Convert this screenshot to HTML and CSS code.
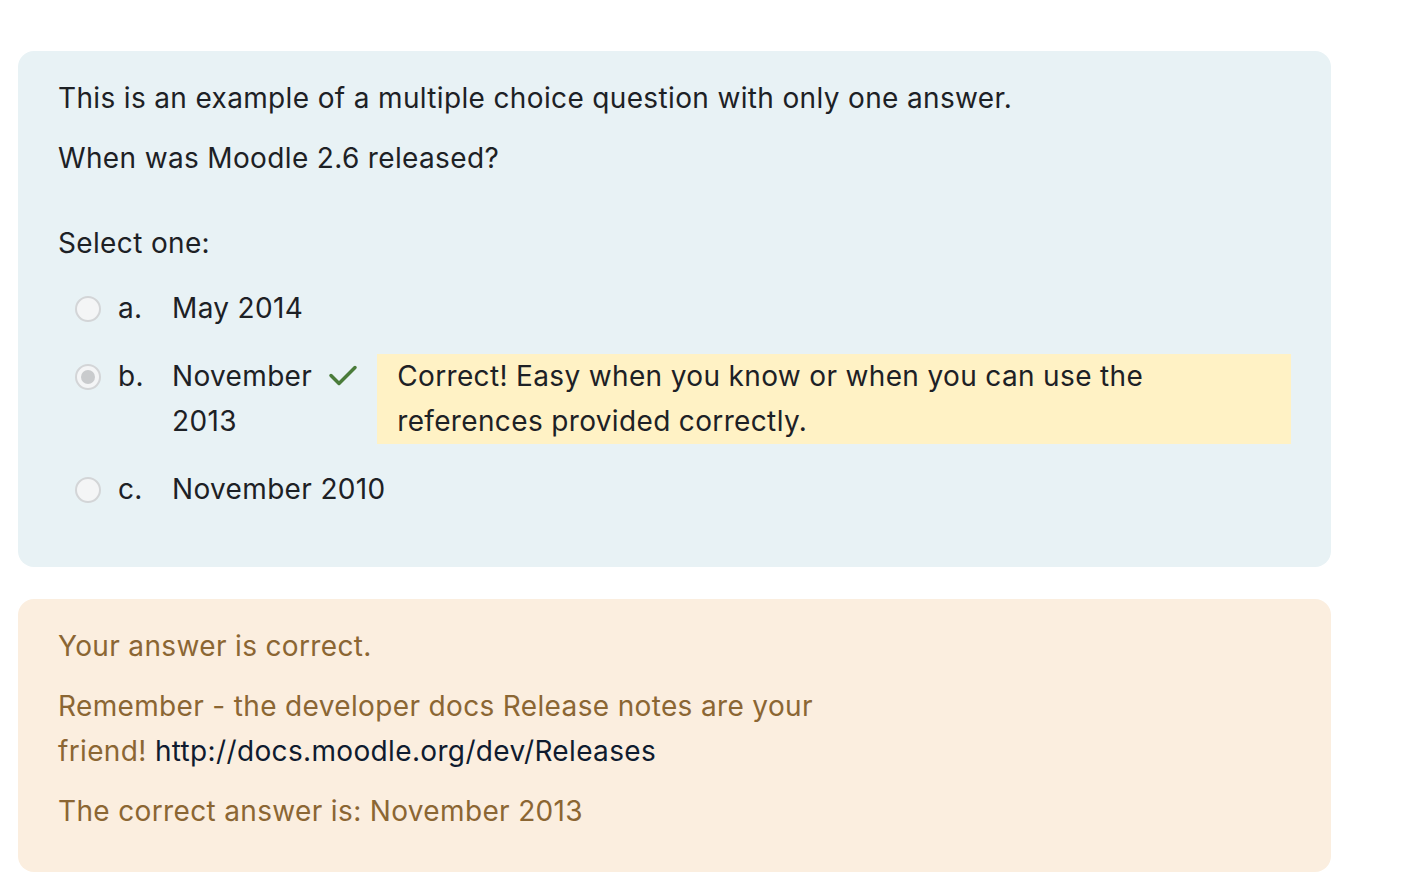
FILE: index.html
```html
<!DOCTYPE html>
<html lang="en">
<head>
<meta charset="utf-8">
<title>Question</title>
<link rel="stylesheet" href="styles.css">
</head>
<body>
<main class="que">
  <section class="formulation">
    <p class="qtext">This is an example of a multiple choice question with only one answer.</p>
    <p class="qtext">When was Moodle 2.6 released?</p>
    <p class="prompt">Select one:</p>
    <div class="answers">
      <div class="option">
        <span class="radio"></span>
        <span class="letter">a.</span>
        <span class="atext">May 2014</span>
      </div>
      <div class="option">
        <span class="radio checked"></span>
        <span class="letter">b.</span>
        <span class="atext narrow">November 2013</span>
        <svg class="tick" width="30" height="26" viewBox="0 0 30 26" aria-hidden="true"><path d="M3 13.5 L11 21.5 L27 5.5" fill="none" stroke="#4a7c3a" stroke-width="3.5" stroke-linecap="round" stroke-linejoin="round"/></svg>
        <div class="specific">Correct! Easy when you know or when you can use the references provided correctly.</div>
      </div>
      <div class="option">
        <span class="radio"></span>
        <span class="letter">c.</span>
        <span class="atext">November 2010</span>
      </div>
    </div>
  </section>
  <section class="outcome">
    <p class="line">Your answer is correct.</p>
    <p class="line general">Remember - the developer docs Release notes are your friend! <a class="link" href="#">http://docs.moodle.org/dev/Releases</a></p>
    <p class="line">The correct answer is: November 2013</p>
  </section>
</main>
</body>
</html>
```
FILE: styles.css
```css
html, body {
  margin: 0;
  padding: 0;
  background: #ffffff;
}
body {
  font-family: Inter, "Noto Sans", "Liberation Sans", sans-serif;
  font-size: 28px;
  letter-spacing: 0.35px;
  line-height: 45px;
  color: #1d2125;
}
p { margin: 0; }
.que {
  width: 1313px;
  padding: 51px 0 0 18px;
  display: flex;
  flex-direction: column;
  gap: 32px;
}
.formulation {
  background: #e8f2f5;
  border-radius: 16px;
  padding: 25px 40px 55px 40px;
}
.qtext + .qtext { margin-top: 15px; }
.prompt { margin-top: 40px; }
.answers {
  margin-top: 20px;
  display: flex;
  flex-direction: column;
  gap: 23px;
}
.option {
  display: flex;
  align-items: flex-start;
}
.radio {
  flex: 0 0 auto;
  box-sizing: border-box;
  width: 26px;
  height: 26px;
  margin: 10px 17px 0 17px;
  border-radius: 50%;
  border: 2px solid #d3d5d7;
  background: #f4f5f6;
  display: flex;
  align-items: center;
  justify-content: center;
}
.radio.checked::after {
  content: "";
  width: 14px;
  height: 14px;
  border-radius: 50%;
  background: #c9cbcd;
}
.letter {
  flex: 0 0 54px;
}
.atext { flex: 0 0 auto; }
.atext.narrow { width: min-content; }
.tick {
  flex: 0 0 auto;
  margin: 8px 19px 0 16px;
}
.specific {
  flex: 1 1 0;
  background: #fff2c5;
  padding: 0 20px;
}
.outcome {
  background: #fbeedf;
  border-radius: 16px;
  padding: 25px 40px 38px 40px;
  color: #8b6633;
}
.line + .line { margin-top: 15px; }
.general { max-width: 800px; }
.link {
  color: #0f1b2f;
  text-decoration: none;
}
```
